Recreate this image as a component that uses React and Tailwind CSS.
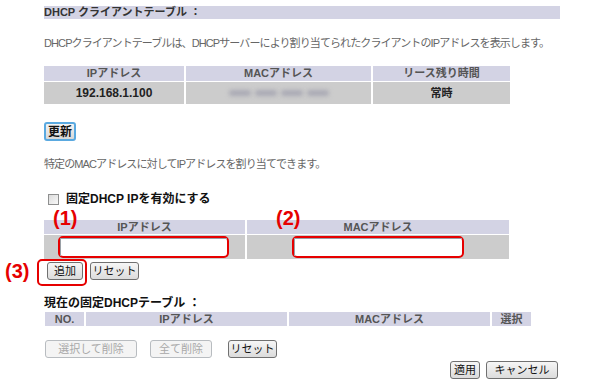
import React from 'react';

const font = { fontFamily: '"Liberation Sans", "Noto Sans CJK JP", sans-serif' };

const Btn = ({ children, disabled, className = '' }) => (
  <button
    type="button"
    disabled={disabled}
    className={`h-[18px] whitespace-nowrap rounded-[3px] border px-0 text-[11px] leading-none ${
      disabled
        ? 'border-[#b8bcc0] bg-[#f4f4f4] text-[#a8a8a8]'
        : 'border-[#707070] bg-gradient-to-b from-[#f6f6f6] to-[#dcdcdc] text-[#111]'
    } ${className}`}
  >
    {children}
  </button>
);

const Mark = ({ children, className }) => (
  <span className={`absolute text-[20px] font-bold leading-none text-[#e60000] ${className}`}>{children}</span>
);

const Head = ({ children, h = 'h-[14px] leading-[14px]' }) => (
  <div className={`${h} whitespace-nowrap bg-[#d3d3e4] text-[11px] font-bold text-[#555]`}>{children}</div>
);

export default function App() {
  return (
    <div className="relative h-[388px] w-[600px] overflow-hidden bg-white text-[11px]" style={font}>
      <div className="ml-[44px] flex flex-col">
        {/* client table */}
        <div className="mt-[6px] h-[13px] w-[516px] whitespace-nowrap bg-[#d3d3e4] text-[11px] font-bold leading-[13px] text-[#333]">
          DHCP クライアントテーブル ：
        </div>
        <p className="mt-[17px] whitespace-nowrap leading-[14px] tracking-[-0.9px] text-[#666]">
          DHCPクライアントテーブルは、DHCPサーバーにより割り当てられたクライアントのIPアドレスを表示します。
        </p>
        <div className="mt-[16px] grid w-[466px] grid-cols-[140px_185px_137px] gap-x-[2px] gap-y-[1px] text-center">
          <Head h="h-[15px] leading-[15px]">IPアドレス</Head>
          <Head h="h-[15px] leading-[15px]">MACアドレス</Head>
          <Head h="h-[15px] leading-[15px]">リース残り時間</Head>
          <div className="h-[22px] bg-[#cccccc] text-[12px] font-bold leading-[22px] text-[#222]">192.168.1.100</div>
          <div className="flex h-[22px] items-center justify-center gap-[4px] bg-[#cccccc]">
            <span className="h-[6px] w-[22px] rounded-full bg-[#a9a9b4] blur-[2px]" />
            <span className="h-[6px] w-[22px] rounded-full bg-[#a9a9b4] blur-[2px]" />
            <span className="h-[6px] w-[22px] rounded-full bg-[#a9a9b4] blur-[2px]" />
            <span className="h-[6px] w-[22px] rounded-full bg-[#a9a9b4] blur-[2px]" />
          </div>
          <div className="h-[22px] bg-[#cccccc] font-bold leading-[22px] text-[#222]">常時</div>
        </div>

        <button
          type="button"
          className="mt-[18px] h-[19px] w-[32px] whitespace-nowrap rounded-[3px] border-2 border-[#5aa9e0] bg-gradient-to-b from-[#f4f4f4] to-[#d8d8d8] px-0 text-[12px] font-bold leading-none text-[#111]"
        >
          更新
        </button>

        <p className="mt-[16px] whitespace-nowrap leading-[14px] tracking-[-0.9px] text-[#666]">
          特定のMACアドレスに対してIPアドレスを割り当てできます。
        </p>

        {/* static DHCP */}
        <label className="mt-[21px] ml-[4px] flex items-center gap-[7px] whitespace-nowrap text-[12px] font-bold leading-[14px] text-[#111]">
          <span className="h-[11px] w-[11px] border border-[#8e8f8f] bg-gradient-to-br from-[#dcdcdc] to-[#f8f8f8]" />
          固定DHCP IPを有効にする
        </label>

        <div className="relative mt-[14px] grid w-[465px] grid-cols-[201px_262px] gap-x-[2px] gap-y-[1px] text-center">
          <Head>IPアドレス</Head>
          <Head>MACアドレス</Head>
          <div className="h-[24px] bg-[#cccccc] py-[1px] pl-[14px]">
            <div className="h-[22px] w-[171px] rounded-[5px] border-2 border-[#e60000] bg-white">
              <div className="h-full w-full border-l border-t border-[#9aa0a6]" />
            </div>
          </div>
          <div className="h-[24px] bg-[#cccccc] py-[1px] pl-[45px]">
            <div className="h-[22px] w-[172px] rounded-[5px] border-2 border-[#e60000] bg-white">
              <div className="h-full w-full border-l border-t border-[#9aa0a6]" />
            </div>
          </div>
          <Mark className="left-[9px] top-[-12px]">(1)</Mark>
          <Mark className="left-[232px] top-[-12px]">(2)</Mark>
        </div>

        <div className="relative flex items-start gap-[3px]">
          <div className="-ml-[7px] rounded-[5px] border-2 border-[#e60000] pl-[8px] pr-[2px] pt-[1px] pb-[4px]">
            <Btn className="w-[36px]">追加</Btn>
          </div>
          <Btn className="mt-[3px] w-[49px]">リセット</Btn>
          <Mark className="left-[-39px] top-[2px]">(3)</Mark>
        </div>

        {/* current table */}
        <div className="mt-[10px] whitespace-nowrap text-[12px] font-bold leading-[14px] text-[#111]">現在の固定DHCPテーブル ：</div>
        <div className="mt-[2px] ml-[1px] grid w-[486px] grid-cols-[39px_201px_201px_39px] gap-x-[2px] text-center">
          <Head>NO.</Head>
          <Head>IPアドレス</Head>
          <Head>MACアドレス</Head>
          <Head>選択</Head>
        </div>

        <div className="mt-[14px] ml-[1px] flex items-center">
          <Btn disabled className="w-[92px]">選択して削除</Btn>
          <Btn disabled className="ml-[13px] w-[62px]">全て削除</Btn>
          <Btn className="ml-[16px] w-[49px]">リセット</Btn>
        </div>

        <div className="mt-[3px] flex w-[514px] justify-end gap-[6px]">
          <Btn className="w-[30px]">適用</Btn>
          <Btn className="w-[72px]">キャンセル</Btn>
        </div>
      </div>
    </div>
  );
}
